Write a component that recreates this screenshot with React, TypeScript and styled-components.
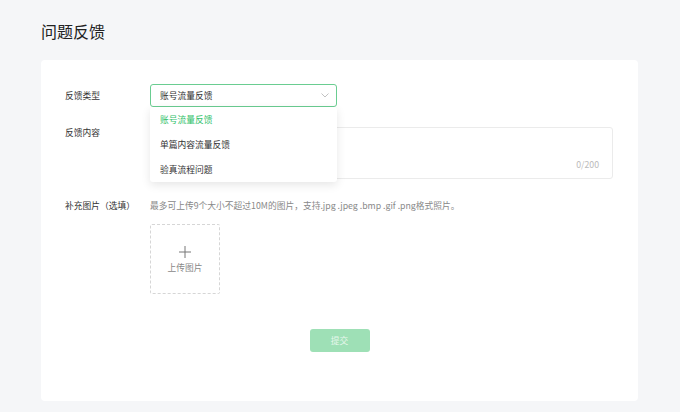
import * as React from 'react'
import styled, { createGlobalStyle } from 'styled-components'

const GREEN = '#33c26b'
const FONT = `"Noto Sans CJK SC", "Noto Sans", "Liberation Sans", sans-serif`
const SMALL = '8.75px'

const GlobalStyle = createGlobalStyle`
    html, body {
        margin: 0;
        padding: 0;
        background: #f5f6f8;
        font-family: ${FONT};
    }
`

const Page = styled.div`
    width: 680px;
    height: 412px;
    box-sizing: border-box;
    padding: 19px 42px 0 41px;
    overflow: hidden;
`

const Title = styled.h1`
    margin: 0 0 17px;
    font-size: 16px;
    line-height: 24px;
    font-weight: 400;
    color: #222;
`

const Card = styled.div`
    background: #fff;
    border-radius: 4px;
    padding: 24px 25px 49px 24px;
    display: flex;
    flex-direction: column;
`

const Row = styled.div<{ $center?: boolean; $gap?: number }>`
    display: grid;
    grid-template-columns: 85px 1fr;
    align-items: ${({ $center }) => ($center ? 'center' : 'start')};
    margin-top: ${({ $gap }) => $gap ?? 0}px;
`

const Label = styled.div`
    font-size: ${SMALL};
    line-height: 12px;
    color: #333;
`

const SelectWrap = styled.div`
    position: relative;
    width: 187px;
`

const SelectBox = styled.div`
    height: 23px;
    box-sizing: border-box;
    border: 1px solid #6acd91;
    border-radius: 3px;
    display: flex;
    align-items: center;
    justify-content: space-between;
    padding: 0 7px 0 9px;
    font-size: ${SMALL};
    color: #333;
`

const Dropdown = styled.ul`
    position: absolute;
    left: 0;
    right: 0;
    top: 100%;
    margin: 0;
    padding: 0;
    list-style: none;
    background: #fff;
    border-radius: 3px;
    box-shadow: 0 3px 10px rgba(0, 0, 0, 0.1);
    z-index: 2;
`

const Option = styled.li<{ $selected?: boolean }>`
    height: 25px;
    line-height: 25px;
    padding-left: 10px;
    font-size: ${SMALL};
    color: ${({ $selected }) => ($selected ? GREEN : '#333')};
`

const TextArea = styled.div`
    height: 52px;
    width: 463px;
    box-sizing: border-box;
    border: 1px solid #ebebeb;
    border-radius: 3px;
    display: flex;
    align-items: flex-end;
    justify-content: flex-end;
    padding: 0 13px 7px 0;
`

const Counter = styled.span`
    font-size: ${SMALL};
    line-height: 12px;
    color: #bbb;
`

const Hint = styled.div`
    font-size: ${SMALL};
    line-height: 12px;
    color: #888;
    white-space: nowrap;
`

const Upload = styled.div`
    margin-top: 12px;
    width: 70px;
    height: 70px;
    box-sizing: border-box;
    border: 1px dashed #d6d6d6;
    border-radius: 2px;
    display: flex;
    flex-direction: column;
    align-items: center;
    justify-content: center;
    gap: 3px;
    padding-top: 2px;
    color: #888;
    font-size: ${SMALL};
`

const Actions = styled.div`
    margin-top: 35px;
    display: flex;
    justify-content: center;
    padding-left: 1px;
`

const SubmitButton = styled.button`
    width: 60px;
    height: 23px;
    border: none;
    border-radius: 3px;
    background: #9ee0b6;
    color: #e6f7ec;
    font-family: ${FONT};
    font-size: ${SMALL};
`

const Chevron = () => (
    <svg width="8" height="5" viewBox="0 0 8 5" fill="none">
        <path d="M0.5 0.5 L4 4 L7.5 0.5" stroke="#bbb" strokeWidth="0.9" />
    </svg>
)

const Plus = () => (
    <svg width="12" height="12" viewBox="0 0 12 12">
        <path d="M6 0 V12 M0 6 H12" stroke="#777" strokeWidth="1" />
    </svg>
)

const options = ['账号流量反馈', '单篇内容流量反馈', '验真流程问题']

export default function App() {
    const [selected] = React.useState(options[0])

    return (
        <>
            <GlobalStyle />
            <Page>
                <Title>问题反馈</Title>
                <Card>
                    <Row $center>
                        <Label>反馈类型</Label>
                        <SelectWrap>
                            <SelectBox>
                                <span>{selected}</span>
                                <Chevron />
                            </SelectBox>
                            <Dropdown>
                                {options.map(o => (
                                    <Option key={o} $selected={o === selected}>
                                        {o}
                                    </Option>
                                ))}
                            </Dropdown>
                        </SelectWrap>
                    </Row>
                    <Row $gap={20}>
                        <Label>反馈内容</Label>
                        <TextArea>
                            <Counter>0/200</Counter>
                        </TextArea>
                    </Row>
                    <Row $gap={21}>
                        <Label>补充图片（选填）</Label>
                        <div>
                            <Hint>
                                最多可上传9个大小不超过10M的图片，支持.jpg .jpeg .bmp .gif .png格式照片。
                            </Hint>
                            <Upload>
                                <Plus />
                                <span>上传图片</span>
                            </Upload>
                        </div>
                    </Row>
                    <Actions>
                        <SubmitButton>提交</SubmitButton>
                    </Actions>
                </Card>
            </Page>
        </>
    )
}
